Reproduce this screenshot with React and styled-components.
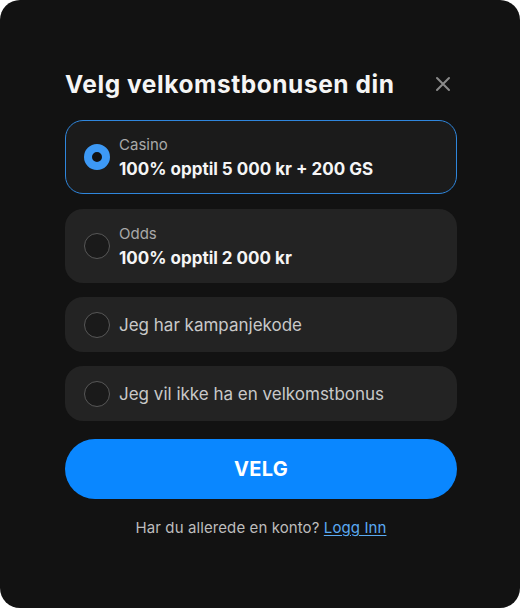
import React from "react";
import styled, { createGlobalStyle } from "styled-components";

const Global = createGlobalStyle`
  html, body { margin: 0; padding: 0; background: #ffffff; }
  body { font-family: Inter, "Noto Sans", sans-serif; -webkit-font-smoothing: antialiased; }
`;

const Modal = styled.div`
  box-sizing: border-box;
  width: 520px;
  height: 608px;
  background: #121212;
  border-radius: 20px;
  padding: 69px 63px 0 65px;
  display: flex;
  flex-direction: column;
`;

const Header = styled.div`
  display: flex;
  align-items: center;
  justify-content: space-between;
  height: 30px;
  margin-bottom: 21px;
`;

const Title = styled.h1`
  margin: 0;
  font-size: 24.5px;
  line-height: 30px;
  font-weight: 700;
  color: #f5f5f5;
  letter-spacing: 0.55px;
`;

const Close = styled.button`
  background: none;
  border: none;
  padding: 0;
  width: 20px;
  height: 20px;
  margin-right: 4px;
  display: flex;
  align-items: center;
  justify-content: center;
  cursor: pointer;
`;

const Options = styled.div`
  display: flex;
  flex-direction: column;
  gap: 14px;
  width: 392px;
`;

const Option = styled.label`
  box-sizing: border-box;
  display: flex;
  align-items: center;
  gap: 9px;
  height: ${(p) => (p.$tall ? "74px" : "55px")};
  margin-bottom: ${(p) => (p.$extra ? "1px" : "0")};
  padding: 0 18px;
  border-radius: 18px;
  background: ${(p) => (p.$selected ? "#1b1b1b" : "#232323")};
  border: 1px solid ${(p) => (p.$selected ? "#2f86dc" : "transparent")};
  cursor: pointer;
`;

const Radio = styled.span`
  box-sizing: border-box;
  flex: none;
  width: 26px;
  height: 26px;
  border-radius: 50%;
  background: ${(p) => (p.$checked ? "#121212" : "#1a1a1a")};
  border: ${(p) => (p.$checked ? "8px solid #3d99f5" : "1px solid #575757")};
`;

const Texts = styled.div`
  display: flex;
  flex-direction: column;
  gap: 3px;
`;

const Label = styled.span`
  font-size: 15px;
  line-height: 20px;
  color: #a9a9a9;
`;

const Value = styled.span`
  font-size: 17px;
  line-height: 22px;
  font-weight: 700;
  color: #f5f5f5;
`;

const Plain = styled.span`
  font-size: 17px;
  line-height: 22px;
  color: #c9c9c9;
`;

const Button = styled.button`
  margin-top: 18px;
  width: 392px;
  height: 60px;
  border: none;
  border-radius: 30px;
  background: #0a87ff;
  color: #ffffff;
  font-family: Inter, "Noto Sans", sans-serif;
  font-size: 20px;
  font-weight: 700;
  letter-spacing: 0.3px;
  cursor: pointer;
`;

const Footer = styled.p`
  margin: 19px 0 0;
  width: 392px;
  text-align: center;
  font-size: 15px;
  line-height: 20px;
  letter-spacing: 0.1px;
  color: #bdbdbd;
`;

const Link = styled.a`
  color: #5aaaf2;
  text-decoration: underline;
  text-underline-offset: 2px;
`;

const CloseIcon = () => (
  <svg width="16" height="16" viewBox="0 0 16 16" fill="none">
    <path d="M2 2L14 14M14 2L2 14" stroke="#8a8a8a" strokeWidth="2" strokeLinecap="round" />
  </svg>
);

export default function App() {
  return (
    <>
      <Global />
      <Modal>
        <Header>
          <Title>Velg velkomstbonusen din</Title>
          <Close aria-label="Lukk">
            <CloseIcon />
          </Close>
        </Header>
        <Options>
          <Option $tall $selected $extra>
            <Radio $checked />
            <Texts>
              <Label>Casino</Label>
              <Value>100% opptil 5 000 kr + 200 GS</Value>
            </Texts>
          </Option>
          <Option $tall>
            <Radio />
            <Texts>
              <Label>Odds</Label>
              <Value>100% opptil 2 000 kr</Value>
            </Texts>
          </Option>
          <Option>
            <Radio />
            <Plain>Jeg har kampanjekode</Plain>
          </Option>
          <Option>
            <Radio />
            <Plain>Jeg vil ikke ha en velkomstbonus</Plain>
          </Option>
        </Options>
        <Button>VELG</Button>
        <Footer>
          Har du allerede en konto? <Link href="#">Logg Inn</Link>
        </Footer>
      </Modal>
    </>
  );
}
